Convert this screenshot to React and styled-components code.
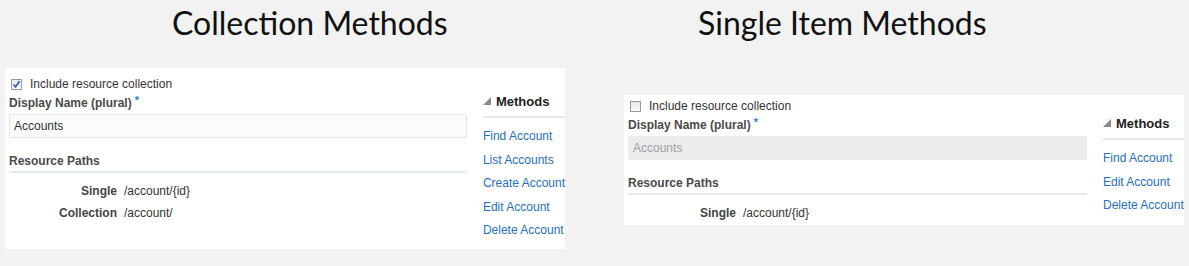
import React from "react";
import styled, { createGlobalStyle } from "styled-components";

const Global = createGlobalStyle`
  html, body { margin: 0; padding: 0; background: #f2f2f2; }
  body { font-family: "Liberation Sans", Arial, sans-serif; }
`;

const Page = styled.div`
  display: flex;
  align-items: flex-start;
  width: 1189px;
  height: 266px;
  padding-left: 5px;
  box-sizing: border-box;
`;

const Section = styled.section`
  display: flex;
  flex-direction: column;
  width: 560px;
  margin-left: ${(p) => p.$offset}px;
`;

const Title = styled.h1`
  margin: 0;
  height: 46px;
  padding-left: ${(p) => p.$indent}px;
  font-family: Lato, "Open Sans", sans-serif;
  font-weight: 400;
  font-size: 32px;
  line-height: 46px;
  color: #111;
  white-space: nowrap;
`;

const Panel = styled.div`
  display: flex;
  align-items: flex-start;
  background: #fff;
  margin-top: ${(p) => p.$top}px;
  padding: ${(p) => p.$padTop}px 0 4px 4px;
`;

const Form = styled.div`
  display: flex;
  flex-direction: column;
  width: 459px;
`;

const CheckRow = styled.label`
  display: flex;
  align-items: center;
  height: 16px;
  font-size: 12px;
  color: #333;
  padding-left: 2px;
`;

const Box = styled.span`
  display: inline-flex;
  align-items: center;
  justify-content: center;
  width: 11px;
  height: 11px;
  box-sizing: border-box;
  border: 1px solid #9a9a9a;
  background: linear-gradient(#e9e9e9, #fafafa);
  margin-right: 8px;
`;

const FieldLabel = styled.div`
  margin-top: 3px;
  font-size: 12px;
  line-height: 16px;
  font-weight: 700;
  color: #4a4a4a;
`;

const Req = styled.sup`
  color: #2a7fd4;
  font-size: 11px;
  line-height: 0;
  margin-left: 3px;
  vertical-align: 3px;
`;

const Input = styled.div`
  margin-top: 3px;
  height: 24px;
  box-sizing: border-box;
  display: flex;
  align-items: center;
  padding-left: 4px;
  font-size: 12px;
  border: 1px solid ${(p) => (p.$disabled ? "#ececee" : "#dfe4ea")};
  background: ${(p) => (p.$disabled ? "#ececee" : "#f9fbfd")};
  color: ${(p) => (p.$disabled ? "#a0a0a0" : "#333")};
  border-radius: 2px;
`;

const SubHeading = styled.div`
  margin-top: 15px;
  font-size: 12px;
  font-weight: 700;
  line-height: 16px;
  color: #4a4a4a;
  padding-bottom: 2px;
  border-bottom: 2px solid #e5eaef;
`;

const Paths = styled.div`
  display: grid;
  grid-template-columns: 108px auto;
  column-gap: 7px;
  row-gap: 6px;
  margin-top: 10px;
  font-size: 12px;
  line-height: 16px;
  color: #333;
`;

const PathLabel = styled.span`
  text-align: right;
  font-weight: 700;
  color: #444;
`;

const PathValue = styled.span`
  color: #333;
`;

const Methods = styled.div`
  display: flex;
  flex-direction: column;
  margin-left: 16px;
  flex: 1;
  margin-top: 16px;
  padding-bottom: 7px;
`;

const MethodsHeader = styled.div`
  display: flex;
  align-items: center;
  height: 18px;
  font-size: 13px;
  font-weight: 700;
  color: #222;
  padding-bottom: 6px;
  border-bottom: 2px solid #e5eaef;
  svg { margin-right: 5px; }
`;

const LinkList = styled.div`
  display: flex;
  flex-direction: column;
  gap: 7.5px;
  margin-top: 10px;
`;

const MethodLink = styled.a`
  font-size: 12px;
  line-height: 16px;
  color: #2470c2;
  text-decoration: none;
  white-space: nowrap;
`;

const Check = () => (
  <svg width="9" height="9" viewBox="0 0 9 9">
    <path d="M1.5 4.5 L3.6 7 L7.5 1.2" fill="none" stroke="#2d55b4" strokeWidth="1.6" />
  </svg>
);

const Tri = () => (
  <svg width="8" height="8" viewBox="0 0 8 8">
    <polygon points="8,0 8,8 0,8" fill="#8a8a8a" />
  </svg>
);

function Card({ title, indent, offset, top, padTop, checked, disabled, paths, links }) {
  return (
    <Section $offset={offset}>
      <Title $indent={indent}>{title}</Title>
      <Panel $top={top} $padTop={padTop}>
        <Form>
          <CheckRow>
            <Box>{checked && <Check />}</Box>
            Include resource collection
          </CheckRow>
          <FieldLabel>
            Display Name (plural)<Req>*</Req>
          </FieldLabel>
          <Input $disabled={disabled}>Accounts</Input>
          <SubHeading>Resource Paths</SubHeading>
          <Paths>
            {paths.map(([k, v]) => (
              <React.Fragment key={k}>
                <PathLabel>{k}</PathLabel>
                <PathValue>{v}</PathValue>
              </React.Fragment>
            ))}
          </Paths>
        </Form>
        <Methods>
          <MethodsHeader>
            <Tri />
            Methods
          </MethodsHeader>
          <LinkList>
            {links.map((l) => (
              <MethodLink key={l} href="#">{l}</MethodLink>
            ))}
          </LinkList>
        </Methods>
      </Panel>
    </Section>
  );
}

export default function App() {
  return (
    <>
      <Global />
      <Page>
        <Card
          title="Collection Methods"
          indent={167}
          offset={0}
          top={22}
          padTop={8}
          checked
          paths={[["Single", "/account/{id}"], ["Collection", "/account/"]]}
          links={["Find Account", "List Accounts", "Create Account", "Edit Account", "Delete Account"]}
        />
        <Card
          title="Single Item Methods"
          indent={74}
          offset={59}
          top={49}
          padTop={3}
          disabled
          paths={[["Single", "/account/{id}"]]}
          links={["Find Account", "Edit Account", "Delete Account"]}
        />
      </Page>
    </>
  );
}
